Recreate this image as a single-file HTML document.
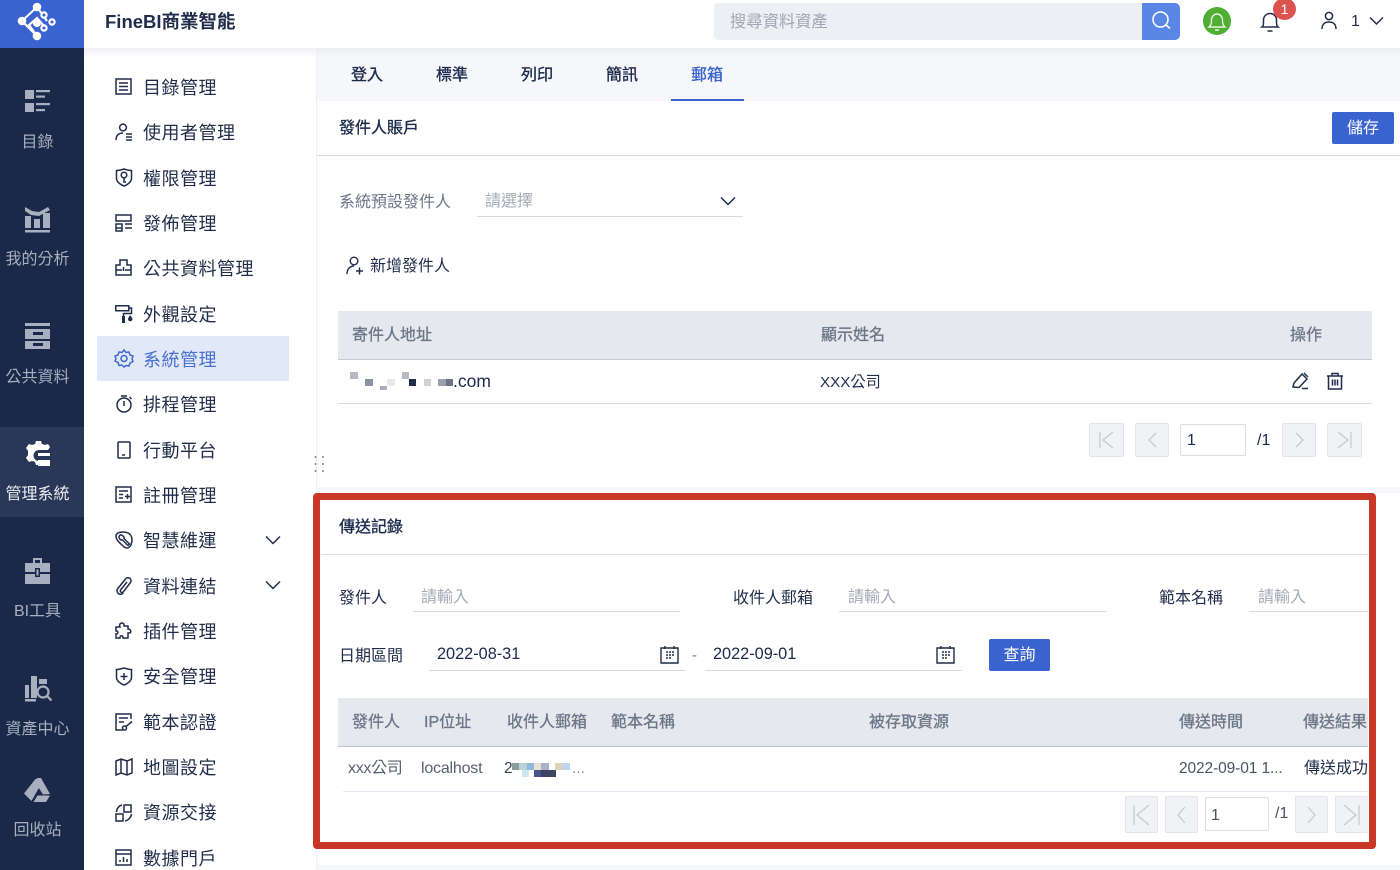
<!DOCTYPE html>
<html lang="zh-Hant"><head><meta charset="utf-8"><title>FineBI</title>
<style>
html,body{margin:0;padding:0;background:#fff}
#p{position:relative;width:1400px;height:870px;overflow:hidden;background:#fff;font-family:"Liberation Sans","Noto Sans CJK TC",sans-serif;color:#1a2a4a}
#p div,#p span.t{position:absolute;white-space:nowrap}
.t{position:absolute;white-space:nowrap;line-height:24px;height:24px}
.m{font-size:18px;letter-spacing:.5px;left:143px;color:#1f2d4a}
.s{font-size:16px;color:#a8afbe;width:75px;left:0;text-align:center}
svg{position:absolute;overflow:visible}
.ic{left:115px;width:18px;height:18px;fill:none;stroke:#1f2d4a;stroke-width:1.5}
.n{left:0;width:84px;height:40px;fill:#a8afbe}
.h{font-size:16px;color:#6b7688;-webkit-text-stroke:.3px #6b7688}
.b{font-size:16px;-webkit-text-stroke:.35px #1a2a4a}
.l{font-size:16px;color:#1f2d4a}
.g{font-size:16px;color:#a4a9b3}
.pb{background:#f1f2f5;border:1px solid #e3e5ea;border-radius:2px;box-sizing:border-box}
.ln{background:#d8dae0;height:1px}
.pg{fill:none;stroke:#c6c9d0;stroke-width:1.3}
.bl{position:absolute}
</style></head><body><div id="p">

<!-- main strip -->
<div style="left:317px;top:48px;width:1083px;height:53px;background:linear-gradient(#eceef2,#f6f7fb 10px)"></div>
<div style="left:84px;top:48px;width:233px;height:10px;background:linear-gradient(#f0f1f4,#fff)"></div>
<div style="left:316px;top:48px;width:1px;height:822px;background:#eef0f4"></div>

<!-- sidebar -->
<div style="left:0;top:0;width:84px;height:870px;background:#1a2949"></div>
<div style="left:0;top:0;width:84px;height:48px;background:#3a63cf"></div>
<div style="left:0;top:427px;width:84px;height:90px;background:#293858"></div>
<svg style="left:17px;top:2px" width="40" height="40" viewBox="0 0 40 40" fill="none" stroke="#fff" stroke-width="2.2"><path d="M20 5 L5 19 L20 34 M5 19 M20 34 L12 23 L20 16 L27 24 M20 5 L30 19"/><circle cx="20" cy="5" r="3.2" fill="#fff"/><circle cx="5" cy="19" r="3.2" fill="#fff"/><circle cx="20" cy="34" r="3.2" fill="#fff"/><circle cx="20" cy="21" r="3" fill="#fff"/><circle cx="35" cy="20" r="2.6" fill="#3a63cf"/><circle cx="27" cy="13" r="2.6" fill="#3a63cf"/><circle cx="27" cy="26" r="2.6" fill="#3a63cf"/></svg>

<svg class="n" style="top:88px" viewBox="0 0 84 40"><rect x="25" y="2" width="9" height="9"/><rect x="25" y="15" width="9" height="9"/><rect x="36" y="2" width="14" height="2.2"/><rect x="36" y="7.5" width="9" height="2.2"/><rect x="36" y="15" width="14" height="2.2"/><rect x="36" y="21" width="9" height="2.2"/></svg>
<span class="t s" style="top:131px">目錄</span>
<svg class="n" style="top:205px" viewBox="0 0 84 40"><path d="M25 2l7 4 7 1 9-5 2 3-11 6-8-1-6-4z"/><rect x="25" y="11" width="6" height="12"/><rect x="34" y="14" width="6" height="9"/><rect x="43" y="8" width="7" height="15"/><rect x="25" y="25" width="25" height="2.5"/></svg>
<span class="t s" style="top:248px">我的分析</span>
<svg class="n" style="top:322px" viewBox="0 0 84 40"><rect x="25" y="1" width="25" height="3"/><path d="M25 7h25v10H25zM33 10v3h10v-3z" fill-rule="evenodd"/><path d="M25 19h25v8H25zM33 21v3h10v-3z" fill-rule="evenodd"/></svg>
<span class="t s" style="top:366px">公共資料</span>
<svg class="n" style="top:440px;fill:#fff" viewBox="0 0 84 40"><path d="M36 1h5l1 3 3 1 3-1 2 3-2 3H39a5 5 0 1 0 0 11v4h-3l-1-3-3-1-3 1-3-4 2-3v-4l-2-3 3-4 3 1 3-1z"/><rect x="38" y="13" width="12" height="3"/><rect x="38" y="20" width="12" height="6"/></svg>
<span class="t s" style="top:483px;color:#e8eaef">管理系統</span>
<svg class="n" style="top:557px" viewBox="0 0 84 40"><path d="M33 1h9v5h8v9H25V6h8zM35 3v3h5V3zM25 17h10v-3h5v3h10v10H25z" fill-rule="evenodd"/><rect x="35" y="11" width="5" height="9" fill="#1a2949"/><rect x="36.5" y="12.5" width="2" height="6" fill="#a8afbe"/></svg>
<span class="t s" style="top:600px">BI工具</span>
<svg class="n" style="top:675px" viewBox="0 0 84 40"><rect x="25" y="10" width="4" height="13"/><rect x="31" y="1" width="6" height="22"/><rect x="39" y="4" width="8" height="5"/><rect x="25" y="24" width="11" height="2.5"/><circle cx="43" cy="17" r="5.5" fill="none" stroke="#a8afbe" stroke-width="2.2"/><path d="M47 21l4.5 4.5" stroke="#a8afbe" stroke-width="2.2"/></svg>
<span class="t s" style="top:718px">資產中心</span>
<svg class="n" style="top:776px" viewBox="0 0 84 40"><path d="M35.500 3 L40 10 L31.500 25 L24 17.500z"/><path d="M37.500 2 L41 2 L50 18 L43 18.500 L34 4.500z"/><path d="M33.500 26 L37.500 19.500 L50 19.500 L46 26z"/></svg>
<span class="t s" style="top:819px">回收站</span>

<!-- header -->
<span class="t" style="left:105px;top:10px;font-size:18.500px;font-weight:700;color:#1f2d4a">FineBI商業智能</span>
<div style="left:714px;top:3px;width:429px;height:37px;background:#eceff4;border-radius:4px 0 0 4px"></div>
<span class="t" style="left:730px;font-size:16.300px;color:#a0a6b2;top:10px">搜尋資料資產</span>
<div style="left:1142px;top:3px;width:38px;height:37px;background:#5a87e6;border-radius:0 5px 5px 0"></div>
<svg style="left:1150px;top:10px" width="22" height="22" fill="none" stroke="#fff" stroke-width="1.5"><circle cx="10.5" cy="9.500" r="7.500"/><path d="M16 15l4 3.500"/></svg>
<div style="left:1203px;top:7px;width:28px;height:28px;border-radius:50%;background:#4fae33"></div>
<svg style="left:1207px;top:10px" width="20" height="22" fill="none" stroke="#e8f5e2" stroke-width="1.4"><path d="M2 17c2-2 2.500-3 2.500-7a5.500 6 0 0 1 11 0c0 4 .5 5 2.500 7zM8 20h4"/></svg>
<svg style="left:1260px;top:11px" width="20" height="22" fill="none" stroke="#1f2d4a" stroke-width="1.5"><path d="M2 16c1.500-1 1.500-3 1.500-7a6.500 6.500 0 0 1 13 0c0 4 0 6 1.500 7zM7.500 20h5"/></svg>
<div style="left:1273px;top:-2px;width:23px;height:22px;border-radius:50%;background:#d9534f;color:#fff;font-size:14px;line-height:22px;text-align:center">1</div>
<svg style="left:1320px;top:11px" width="18" height="20" fill="none" stroke="#1f2d4a" stroke-width="1.5"><circle cx="9" cy="5" r="3.600"/><path d="M2 18c0-5 3-7 7-7s7 2 7 7"/></svg>
<span class="t" style="left:1351px;top:10px;font-size:16px">1</span>
<svg style="left:1369px;top:16px" width="15" height="10" fill="none" stroke="#1f2d4a" stroke-width="1.5"><path d="M1 1.500l6.500 6.500L14 1.500"/></svg>

<!-- menu -->
<div style="left:97px;top:336px;width:192px;height:45px;background:#e1e8f7"></div>
<span class="t m" style="top:76px">目錄管理</span>
<svg class="ic" style="top:78px"><rect x="1" y="1" width="15" height="15"/><path d="M4 5h9M4 8.500h9M4 12h9"/></svg>
<span class="t m" style="top:121px">使用者管理</span>
<svg class="ic" style="top:123px"><circle cx="8" cy="4.500" r="3.400"/><path d="M1 17c0-5 3-7 7-7M11 11h6M11 14h6M11 17h6" /></svg>
<span class="t m" style="top:167px">權限管理</span>
<svg class="ic" style="top:168px"><path d="M9 1c3 1 5 1.500 7.500 1.500v8C16.500 14 12 17 9 18c-3-1-7.500-4-7.500-7.500v-8C4 2.500 6 2 9 1z"/><circle cx="9" cy="7" r="2.800"/><path d="M9 10v4h2"/></svg>
<span class="t m" style="top:212px">發佈管理</span>
<svg class="ic" style="top:214px"><path d="M1 1h15v6H1zM1 10h6v7H1zM10 10h7M10 14h7M1 14h6"/></svg>
<span class="t m" style="top:257px">公共資料管理</span>
<svg class="ic" style="top:259px"><path d="M1 6h4V1h7v5h4v10H1zM1 11h6M10 11h6M8.500 8v4"/></svg>
<span class="t m" style="top:303px">外觀設定</span>
<svg class="ic" style="top:305px;fill:none"><path d="M.8.8h13v5h-13zM14 3h2.500v5.500H8.500V11"/><path d="M7 11h3v7H7zM15 10c1.500 2 2.500 3 2.500 4a2.200 2.200 0 0 1-4.500 0c0-1 1-2 2-4z" fill="#1f2d4a" stroke="none"/></svg>
<span class="t m" style="top:348px;color:#4a6fd0">系統管理</span>
<svg class="ic" style="top:350px;stroke:#3f68cc"><path d="M9 0l2 2.500 3-.5 1 3 3 1-1 3 1 2.500-3 1.500-1 3-3-.5L9 17l-2-2-3 .5-1-3-3-1.500L1 9 0 6l3-1 1-3 3 .5z"/><circle cx="9" cy="8.500" r="3"/></svg>
<span class="t m" style="top:393px">排程管理</span>
<svg class="ic" style="top:395px"><circle cx="9" cy="10" r="7"/><path d="M6 1h6M9 6v5M14.500 2l2 2"/></svg>
<span class="t m" style="top:439px">行動平台</span>
<svg class="ic" style="top:441px"><rect x="3" y="1" width="12" height="16" rx="1"/><path d="M7 14h3"/></svg>
<span class="t m" style="top:484px">註冊管理</span>
<svg class="ic" style="top:486px"><rect x="1" y="1" width="15" height="15"/><path d="M4 5h9M4 8.500h4M4 12h4M10 10.500h5M12.500 8v5"/></svg>
<span class="t m" style="top:529px">智慧維運</span>
<svg class="ic" style="top:531px"><path d="M1 5c0-2 2-4 7-4 6 0 9 3 9 8 0 4-2 8-5 8-2 0-3-1-5-3-3-3-6-5-6-9z"/><path d="M4.500 4.500a3 3 0 0 1 4.500 3l5.500 5.500-1.500 1.500-5.500-5.500a3 3 0 0 1-3-4.500z"/></svg>
<svg style="left:265px;top:535px" width="16" height="10" fill="none" stroke="#1f2d4a" stroke-width="1.500"><path d="M1 1.500l7 7 7-7"/></svg>
<span class="t m" style="top:575px">資料連結</span>
<svg class="ic" style="top:577px"><path d="M12 5L5.500 13a1.700 1.700 0 0 0 2.700 2l7.300-9.500a3 3 0 0 0-5-3.500L2.800 11.500a3.500 3.500 0 0 0 5.500 4.500"/></svg>
<svg style="left:265px;top:580px" width="16" height="10" fill="none" stroke="#1f2d4a" stroke-width="1.500"><path d="M1 1.500l7 7 7-7"/></svg>
<span class="t m" style="top:620px">插件管理</span>
<svg class="ic" style="top:622px"><path d="M7 1c2 0 2 1 2 3h4v3c3 0 4 4 1 4h-1v5H8c0-3-3-3-3 0H1v-4c2 0 3-3 0-3V5h4C4 3 5 1 7 1z"/></svg>
<span class="t m" style="top:665px">安全管理</span>
<svg class="ic" style="top:667px"><path d="M9 1c3 1 5 1.500 7.500 1.500v8C16.500 14 12 17 9 18c-3-1-7.500-4-7.500-7.500v-8C4 2.500 6 2 9 1z"/><path d="M5.500 9.500h7M9 6v7"/></svg>
<span class="t m" style="top:711px">範本認證</span>
<svg class="ic" style="top:713px"><path d="M8 17H1V1h15v5M4 5h9M4 9h5"/><circle cx="9.500" cy="15" r="2"/><path d="M11 13.500l6-5"/></svg>
<span class="t m" style="top:756px">地圖設定</span>
<svg class="ic" style="top:758px"><path d="M1 3l5-2 6 2 5-2v14l-5 2-6-2-5 2zM6 1v14M12 3v14"/></svg>
<span class="t m" style="top:801px">資源交接</span>
<svg class="ic" style="top:804px"><path d="M9 1h7v7H9zM1 10h7v7H1zM1.500 8C1.500 5 4 1.500 7 1M10 17c3-.5 6-3.500 6.500-7"/></svg>
<span class="t m" style="top:847px">數據門戶</span>
<svg class="ic" style="top:849px"><rect x="1" y="1" width="15" height="15"/><path d="M1 5h15M5 13v-2M8.500 13V8M12 13v-3"/></svg>

<!-- resize handle -->
<svg style="left:314px;top:455px" width="12" height="18" fill="#7a7f8a"><circle cx="1.500" cy="2" r="1"/><circle cx="9" cy="2" r="1"/><circle cx="1.500" cy="9" r="1"/><circle cx="9" cy="9" r="1"/><circle cx="1.500" cy="16" r="1"/><circle cx="9" cy="16" r="1"/></svg>

<!-- tabs -->
<span class="t b" style="left:351px;top:64px">登入</span>
<span class="t b" style="left:436px;top:64px">標準</span>
<span class="t b" style="left:521px;top:64px">列印</span>
<span class="t b" style="left:606px;top:64px">簡訊</span>
<span class="t b" style="left:691px;top:64px;color:#3a63cf;-webkit-text-stroke-color:#3a63cf">郵箱</span>
<div style="left:671px;top:99px;width:73px;height:2px;background:#3a63cf"></div>

<!-- sender -->
<span class="t b" style="left:339px;top:117px">發件人賬戶</span>
<div style="left:1332px;top:112px;width:62px;height:32px;background:#3a63cf;border-radius:2px;color:#fff;font-size:16px;line-height:33px;text-align:center">儲存</div>
<div class="ln" style="left:317px;top:155px;width:1083px"></div>

<span class="t" style="left:339px;top:191px;font-size:16px;color:#6b7688">系統預設發件人</span>
<span class="t g" style="left:485px;top:190px">請選擇</span>
<div class="ln" style="left:477px;top:216px;width:266px"></div>
<svg style="left:720px;top:196px" width="16" height="10" fill="none" stroke="#1f2d4a" stroke-width="1.500"><path d="M1 1.500l7 7 7-7"/></svg>

<svg style="left:346px;top:256px" width="18" height="20" fill="none" stroke="#1f2d4a" stroke-width="1.400"><circle cx="8" cy="5" r="3.800"/><path d="M1 18c0-5 3-8 7-8M10 15h7M13.500 11.500v7"/></svg>
<span class="t l" style="left:370px;top:255px">新增發件人</span>

<div style="left:338px;top:311px;width:1034px;height:48px;background:#e5e8ed"></div>
<div style="left:338px;top:359px;width:1034px;height:1px;background:#c5c9d3"></div>
<span class="t h" style="left:352px;top:324px">寄件人地址</span>
<span class="t h" style="left:821px;top:324px">顯示姓名</span>
<span class="t h" style="left:1290px;top:324px">操作</span>

<!-- mosaic -->
<div class="bl" style="left:350px;top:372px;width:8px;height:7px;background:#b4b9c4"></div>
<div class="bl" style="left:365px;top:379px;width:8px;height:7px;background:#8b92a1"></div>
<div class="bl" style="left:380px;top:386px;width:7px;height:4px;background:#a8adb8"></div>
<div class="bl" style="left:387px;top:379px;width:8px;height:7px;background:#e8e9ec"></div>
<div class="bl" style="left:402px;top:372px;width:7px;height:7px;background:#b4b9c4"></div>
<div class="bl" style="left:409px;top:379px;width:7px;height:7px;background:#1f2d4a"></div>
<div class="bl" style="left:424px;top:379px;width:7px;height:7px;background:#d0d2d8"></div>
<div class="bl" style="left:438px;top:379px;width:8px;height:7px;background:#9ba1ae"></div>
<div class="bl" style="left:446px;top:379px;width:7px;height:7px;background:#6f7787"></div>
<span class="t" style="left:453px;top:369px;font-size:17.500px">.com</span>
<span class="t l" style="left:820px;top:371px;font-size:15.200px">XXX公司</span>
<svg style="left:1291px;top:372px" width="20" height="20" fill="none" stroke="#1f2d4a" stroke-width="1.500"><path d="M2 15l1-4L11 2l5 5-8 8.500zM13 1l4 4M11 16.500h6"/></svg>
<svg style="left:1326px;top:372px" width="18" height="19" fill="none" stroke="#1f2d4a" stroke-width="1.500"><path d="M1 4h16M6 4V1.500h6V4M2.500 4v13h13V4M6.500 7.500v6M9 7.500v6M11.500 7.500v6"/></svg>
<div class="ln" style="left:338px;top:403px;width:1034px"></div>

<div class="pb" style="left:1089px;top:423px;width:35px;height:34px"></div>
<svg class="pg" style="left:1098px;top:431px" width="18" height="18"><path d="M2 1v16M15 1L5 9l10 8"/></svg>
<div class="pb" style="left:1135px;top:423px;width:34px;height:34px"></div>
<svg class="pg" style="left:1147px;top:432px" width="12" height="16"><path d="M9 1L2 8l7 7"/></svg>
<div style="left:1180px;top:424px;width:66px;height:32px;border:1px solid #dcdee3;border-radius:2px;box-sizing:border-box"></div>
<span class="t" style="left:1187px;top:429px;font-size:16px">1</span>
<span class="t" style="left:1257px;top:429px;font-size:16px">/1</span>
<div class="pb" style="left:1282px;top:423px;width:34px;height:34px"></div>
<svg class="pg" style="left:1294px;top:432px" width="12" height="16"><path d="M2 1l7 7-7 7"/></svg>
<div class="pb" style="left:1327px;top:423px;width:35px;height:34px"></div>
<svg class="pg" style="left:1336px;top:431px" width="18" height="18"><path d="M15 1v16M2 1l10 8-10 8"/></svg>

<div style="left:317px;top:487px;width:1083px;height:6px;background:#f6f7fb"></div>
<div style="left:317px;top:865px;width:1083px;height:5px;background:#f6f7fb"></div>

<!-- record box -->
<div style="left:320px;top:501px;width:1048px;height:340px;overflow:hidden;background:#fff">
 <span class="t b" style="left:19px;top:15px">傳送記錄</span>
 <div style="left:1px;top:53px;width:1047px;height:1px;background:#dcdee4"></div>

 <span class="t l" style="left:19px;top:86px">發件人</span>
 <span class="t g" style="left:101px;top:85px">請輸入</span>
 <div class="ln" style="left:93px;top:110px;width:267px"></div>
 <span class="t l" style="left:413px;top:86px">收件人郵箱</span>
 <span class="t g" style="left:528px;top:85px">請輸入</span>
 <div class="ln" style="left:519px;top:110px;width:267px"></div>
 <span class="t l" style="left:839px;top:86px">範本名稱</span>
 <span class="t g" style="left:938px;top:85px">請輸入</span>
 <div class="ln" style="left:929px;top:110px;width:119px"></div>

 <span class="t l" style="left:19px;top:144px">日期區間</span>
 <span class="t" style="left:117px;top:141px;font-size:16.300px">2022-08-31</span>
 <div class="ln" style="left:109px;top:169px;width:256px"></div>
 <svg style="left:340px;top:144px" width="20" height="19" fill="none" stroke="#1f2d4a" stroke-width="1.400"><path d="M1 3h17v15H1zM5 1v3M14 1v3"/><path d="M6 7h2M9 7h2M12 7h2M6 10h2M9 10h2M12 10h2M6 13h2M9 13h2" stroke-width="1.600"/></svg>
 <span class="t" style="left:372px;top:143px;font-size:15px;color:#6b7688">-</span>
 <span class="t" style="left:393px;top:141px;font-size:16.300px">2022-09-01</span>
 <div class="ln" style="left:385px;top:169px;width:257px"></div>
 <svg style="left:616px;top:144px" width="20" height="19" fill="none" stroke="#1f2d4a" stroke-width="1.400"><path d="M1 3h17v15H1zM5 1v3M14 1v3"/><path d="M6 7h2M9 7h2M12 7h2M6 10h2M9 10h2M12 10h2M6 13h2M9 13h2" stroke-width="1.600"/></svg>
 <div style="left:669px;top:138px;width:61px;height:32px;background:#3a63cf;border-radius:2px;color:#fff;font-size:16px;line-height:33px;text-align:center">查詢</div>

 <div style="left:18px;top:197px;width:1030px;height:48px;background:#e5e8ed"></div>
 <div style="left:18px;top:245px;width:1030px;height:1px;background:#bfc3cd"></div>
 <span class="t h" style="left:32px;top:210px">發件人</span>
 <span class="t h" style="left:104px;top:210px">IP位址</span>
 <span class="t h" style="left:187px;top:210px">收件人郵箱</span>
 <span class="t h" style="left:291px;top:210px">範本名稱</span>
 <span class="t h" style="left:549px;top:210px">被存取資源</span>
 <span class="t h" style="left:859px;top:210px">傳送時間</span>
 <span class="t h" style="left:983px;top:210px">傳送結果</span>

 <span class="t" style="left:28px;top:256px;font-size:16px;color:#5a6070;letter-spacing:-.3px">xxx公司</span>
 <span class="t" style="left:101px;top:256px;font-size:16px;color:#5a6070;letter-spacing:-.2px">localhost</span>
 <span class="t" style="left:184px;top:256px;font-size:15.500px;color:#3a4256">2</span>
 <div class="bl" style="left:192px;top:262px;width:7px;height:7px;background:#8e9c9c"></div>
 <div class="bl" style="left:199px;top:262px;width:8px;height:7px;background:#b9d2d6"></div>
 <div class="bl" style="left:207px;top:262px;width:7px;height:7px;background:#93b8dc"></div>
 <div class="bl" style="left:214px;top:262px;width:7px;height:7px;background:#e8e3d6"></div>
 <div class="bl" style="left:221px;top:262px;width:8px;height:7px;background:#a9b2c6"></div>
 <div class="bl" style="left:214px;top:269px;width:7px;height:7px;background:#45568f"></div>
 <div class="bl" style="left:221px;top:269px;width:15px;height:7px;background:#3d4463"></div>
 <div class="bl" style="left:202px;top:269px;width:7px;height:7px;background:#cfe6f2"></div>
 <div class="bl" style="left:235px;top:262px;width:8px;height:7px;background:#e0d4b8"></div>
 <div class="bl" style="left:242px;top:262px;width:8px;height:7px;background:#bcd6ec"></div>
 <span class="t" style="left:252px;top:256px;font-size:15.500px;color:#8a909c">...</span>
 <span class="t" style="left:859px;top:256px;font-size:15.500px;color:#4a5266;letter-spacing:-.1px">2022-09-01 1...</span>
 <span class="t l" style="left:984px;top:256px">傳送成功</span>
 <div style="left:23px;top:290px;width:1025px;height:1px;background:#e4e8f2"></div>

 <div class="pb" style="left:805px;top:295px;width:33px;height:37px"></div>
 <svg class="pg" style="left:812px;top:303px" width="20" height="22" stroke-width="1.500"><path d="M2 1v20M17 1L5 11l12 10"/></svg>
 <div class="pb" style="left:845px;top:295px;width:33px;height:37px"></div>
 <svg class="pg" style="left:856px;top:305px" width="12" height="18"><path d="M9 1L2 9l7 8"/></svg>
 <div style="left:885px;top:296px;width:64px;height:34px;border:1px solid #dcdee3;border-radius:2px;box-sizing:border-box"></div>
 <span class="t" style="left:891px;top:303px;font-size:16px;color:#4a5266">1</span>
 <span class="t" style="left:955px;top:301px;font-size:16px;color:#4a5266">/1</span>
 <div class="pb" style="left:975px;top:295px;width:33px;height:37px"></div>
 <svg class="pg" style="left:986px;top:305px" width="12" height="18"><path d="M2 1l7 8-7 8"/></svg>
 <div class="pb" style="left:1015px;top:295px;width:33px;height:37px;border-right:0"></div>
 <svg class="pg" style="left:1022px;top:303px" width="20" height="22" stroke-width="1.500"><path d="M17 1v20M2 1l12 10L2 21"/></svg>
</div>
<div style="left:313px;top:493px;width:1063px;height:356px;border:7.500px solid #c93726;border-radius:4px;box-sizing:border-box"></div>

</div></body></html>
